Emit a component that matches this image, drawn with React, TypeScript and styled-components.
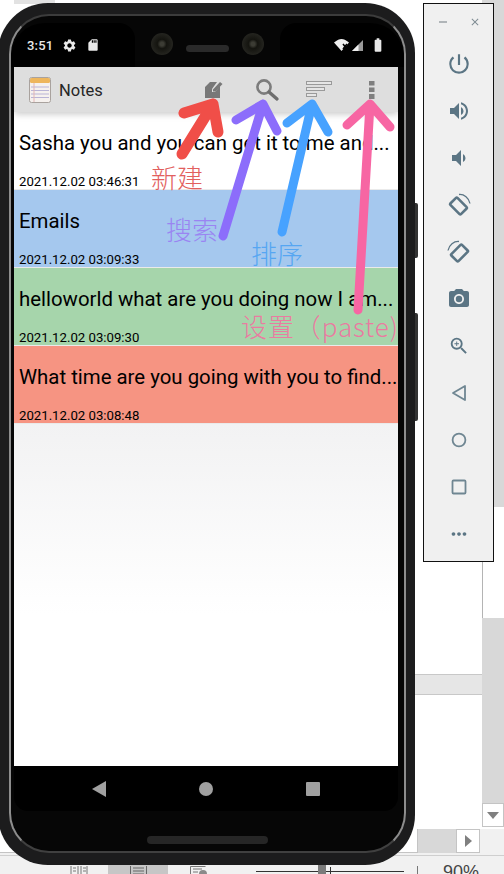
import { createGlobalStyle, styled } from "styled-components";
import {
  MdBatteryFull,
  MdCameraAlt,
  MdClose,
  MdMoreHoriz,
  MdPowerSettingsNew,
  MdSdCard,
  MdSettings,
  MdVolumeDown,
  MdVolumeUp,
  MdZoomIn,
} from "react-icons/md";

const GlobalStyle = createGlobalStyle`
  html, body {
    margin: 0;
    padding: 0;
    background: #fff;
    overflow: hidden;
  }
  * {
    box-sizing: border-box;
  }
`;

const Desktop = styled.div`
  position: relative;
  width: 504px;
  height: 874px;
  overflow: hidden;
  background: #fff;
  display: flex;
  flex-direction: column;
  font-family: Roboto, "Noto Sans", sans-serif;
`;

/* word document behind the emulator */
const DocArea = styled.div`
  display: flex;
  height: 829px;
`;

const DocPage = styled.div`
  flex: 1;
  display: flex;
  flex-direction: column;
  background: #fff;
`;

const TopTab = styled.div`
  width: 41px;
  height: 4px;
  margin-left: 14px;
  background: #e2e2e2;
`;

const PageWhite = styled.div<{ $h: number }>`
  height: ${(p) => p.$h}px;
`;

const PageGap = styled.div`
  height: 21px;
  background: #e6e6e6;
  border-top: 1px solid #c8c8c8;
  border-bottom: 1px solid #c8c8c8;
`;

const VScroll = styled.div`
  width: 22px;
  display: flex;
  flex-direction: column;
`;

const Track = styled.div<{ $h: number }>`
  height: ${(p) => p.$h}px;
  background: #d8d8d8;
`;

const Thumb = styled.div`
  height: 111px;
  background: #fff;
  border-left: 1px solid #b4b4b4;
`;

const ScrollButton = styled.div`
  height: 24px;
  background: #fff;
  border: 1px solid #c4c4c4;
  display: flex;
  align-items: center;
  justify-content: center;
`;

const HScroll = styled.div`
  display: flex;
  height: 26px;
  background: #f1f1f1;
  padding-bottom: 2px;
`;

const HThumb = styled.div`
  width: 418px;
  background: #fff;
  border-right: 1px solid #c4c4c4;
  border-bottom: 1px solid #c4c4c4;
`;

const HTrack = styled.div`
  width: 38px;
  background: #d8d8d8;
`;

const HButton = styled.div`
  width: 24px;
  background: #fff;
  border: 1px solid #c4c4c4;
  display: flex;
  align-items: center;
  justify-content: center;
`;

const StatusStrip = styled.div`
  flex: 1;
  display: flex;
  background: #f1f1f1;
  border-top: 1px solid #cfcfcf;
  padding-left: 70px;
  overflow: hidden;
`;

const StripIcon = styled.svg<{ $left: number }>`
  flex: none;
  margin-left: ${(p) => p.$left}px;
  margin-top: 10px;
`;

const ActiveView = styled.div`
  width: 60px;
  margin-left: 20px;
  background: #c6c6c6;
  display: flex;
  justify-content: center;
  padding-top: 10px;
`;

const ZoomSlider = styled.div`
  position: relative;
  width: 148px;
  height: 1px;
  margin: 15px 0 0 48px;
  background: #333;
`;

const SliderThumb = styled.div`
  position: absolute;
  left: 62px;
  top: -6px;
  width: 8px;
  height: 10px;
  background: #7b7b7b;
`;

const SliderTick = styled.div`
  position: absolute;
  left: 74px;
  top: -4px;
  width: 1px;
  height: 8px;
  background: #333;
`;

const StripDivider = styled.div`
  width: 1px;
  height: 8px;
  margin: 10px 0 0 13px;
  background: #777;
`;

const ZoomLabel = styled.span`
  margin: 6px 0 0 25px;
  font-family: "Liberation Sans", Arial, sans-serif;
  font-size: 18px;
  line-height: 20px;
  color: #444;
`;

/* android emulator */
const PhoneShell = styled.div`
  position: absolute;
  left: -2px;
  top: 3px;
  width: 417px;
  height: 862px;
  padding: 11px 9px 12px 11px;
  border-radius: 50px;
  background: #1c1c1d;
`;

const SideKey = styled.div<{ $top: number; $h: number }>`
  position: absolute;
  right: -3px;
  top: ${(p) => p.$top}px;
  width: 3px;
  height: ${(p) => p.$h}px;
  background: #333;
  border-radius: 0 2px 2px 0;
`;

const Bezel = styled.div`
  height: 100%;
  display: flex;
  flex-direction: column;
  border: 2px solid #8d8d8d;
  border-top-color: #3c3c3c;
  border-bottom-color: #404040;
  border-radius: 40px;
  background: #060606;
  overflow: hidden;
`;

const StatusBar = styled.div`
  height: 51px;
  flex: none;
  display: flex;
  padding-top: 7px;
  color: #e8e8e8;
`;

const StatusSide = styled.div<{ $right?: boolean }>`
  width: 124px;
  display: flex;
  align-items: center;
  background: #000;
  padding: ${(p) => (p.$right ? "0 18px 0 0" : "0 0 0 16px")};
  justify-content: ${(p) => (p.$right ? "flex-end" : "flex-start")};
  gap: ${(p) => (p.$right ? "3px" : "9px")};
  border-radius: ${(p) => (p.$right ? "16px 34px 0 0" : "34px 16px 0 0")};
`;

const Clock = styled.span`
  font-size: 13px;
  font-weight: 500;
  letter-spacing: 0.2px;
`;

const Notch = styled.div`
  width: 145px;
  display: flex;
  align-items: center;
  justify-content: space-between;
  padding: 0 16px;
  margin-bottom: 2px;
`;

const Camera = styled.div`
  width: 22px;
  height: 22px;
  border-radius: 50%;
  background: radial-gradient(circle, #3c3c34 0 12%, #14140f 30%, #24241f 70%, #161614 100%);
`;

const Speaker = styled.div`
  width: 43px;
  height: 7px;
  margin-top: 8px;
  border-radius: 4px;
  background: #2a2a2a;
`;

const Screen = styled.div`
  flex: 1;
  margin: 0 6px 0 3px;
  display: flex;
  flex-direction: column;
  background: #fff;
`;

const Toolbar = styled.div`
  position: relative;
  z-index: 1;
  height: 45px;
  flex: none;
  display: flex;
  align-items: center;
  padding-left: 15px;
  background: #dedede;
  box-shadow: 0 2px 7px rgba(0, 0, 0, 0.22);
`;

const AppTitle = styled.span`
  margin: 2px 0 0 8px;
  font-size: 16.5px;
  color: #262626;
`;

const Actions = styled.div`
  margin-left: auto;
  display: flex;
`;

const ActionSlot = styled.div`
  width: 52.5px;
  display: flex;
  justify-content: center;
  align-items: center;
`;

const NoteRow = styled.div<{ $bg: string }>`
  height: 78px;
  flex: none;
  display: flex;
  flex-direction: column;
  justify-content: space-between;
  padding: 19px 0 0 5px;
  background: ${(p) => p.$bg};
  border-bottom: 1px solid #eaeaea;
  color: #000;
`;

const NoteTitle = styled.div`
  font-size: 20.4px;
  line-height: 24px;
  white-space: nowrap;
`;

const NoteDate = styled.div`
  font-size: 13.2px;
  line-height: 15px;
`;

const EmptyArea = styled.div`
  flex: 1;
  background: linear-gradient(#f2f2f3, #ffffff 190px);
`;

const NavBar = styled.div`
  height: 45px;
  flex: none;
  margin: 0 6px 0 3px;
  display: grid;
  grid-template-columns: repeat(3, 107px);
  justify-content: center;
  align-items: center;
  justify-items: center;
  background: #000;
  border-radius: 0 0 14px 14px;
`;

const Chin = styled.div`
  height: 40px;
  flex: none;
  display: flex;
  align-items: flex-end;
  justify-content: center;
  padding-bottom: 7px;
`;

const ChinSpeaker = styled.div`
  width: 121px;
  height: 8px;
  border-radius: 4px;
  background: #262626;
`;

/* floating emulator toolbar */
const ControlPanel = styled.div`
  position: absolute;
  left: 423px;
  top: 3px;
  width: 71px;
  height: 559px;
  display: flex;
  flex-direction: column;
  align-items: center;
  background: #f0f0f0;
  border: 1px solid #111;
  color: #5b7584;
`;

const WindowButtons = styled.div`
  width: 100%;
  height: 36px;
  flex: none;
  display: flex;
  align-items: center;
  justify-content: space-between;
  padding: 0 12px 0 15px;
  color: #7f8c93;
`;

const MinimizeMark = styled.div`
  width: 8px;
  height: 2px;
  background: #b0b5b8;
`;

const ControlButton = styled.div`
  width: 100%;
  height: 47px;
  flex: none;
  display: flex;
  align-items: center;
  justify-content: center;
`;

/* hand drawn notes on top of the screenshot */
const Overlay = styled.svg`
  position: absolute;
  inset: 0;
  z-index: 2;
  pointer-events: none;
`;

const Scribble = styled.span<{ $x: number; $y: number; $color: string; $spacing?: number }>`
  position: absolute;
  z-index: 2;
  left: ${(p) => p.$x}px;
  top: ${(p) => p.$y}px;
  font-family: "Noto Sans CJK SC", "Noto Sans", sans-serif;
  font-size: 26px;
  line-height: 28px;
  font-weight: 300;
  letter-spacing: ${(p) => p.$spacing ?? 0}px;
  white-space: nowrap;
  color: ${(p) => p.$color};
`;

const notes = [
  { title: "Sasha you and you can get it to me and...", date: "2021.12.02 03:46:31", bg: "#ffffff" },
  { title: "Emails", date: "2021.12.02 03:09:33", bg: "#a5c8ee" },
  { title: "helloworld what are you doing now I am...", date: "2021.12.02 03:09:30", bg: "#a6d5ab" },
  { title: "What time are you going with you to find...", date: "2021.12.02 03:08:48", bg: "#f69482" },
];

const arrows = [
  { color: "#f04e48", width: 11, d: "M182 154L213 104M184 113L213 104L218 132" },
  { color: "#8c6dfb", width: 9, d: "M223 236L263 104M236 120L263 104L277 131" },
  { color: "#47a2ff", width: 9, d: "M282 232L312 104M287 123L312 104L328 132" },
  { color: "#f766a3", width: 9, d: "M358 310L370 104M347 125L370 104L390 127" },
];

function NotesIcon() {
  return (
    <svg width="22" height="26" viewBox="0 0 22 26">
      <rect x="0.5" y="0.5" width="21" height="25" rx="2" fill="#f6f1ee" stroke="#a9a29e" />
      <rect x="1" y="1" width="20" height="5" rx="1.5" fill="#eeb65c" />
      <path d="M2 10h18M2 13.5h18M2 17h18M2 20.5h18" stroke="#b9b4d6" strokeWidth="1" />
      <path d="M5 6v19" stroke="#e2b6b6" strokeWidth="1" />
    </svg>
  );
}

function EditIcon() {
  return (
    <svg width="18" height="18" viewBox="0 0 18 18">
      <path d="M5 1h7L7 8v3h3l5-6v12H0V6z" fill="#787878" />
      <path d="M8 8.5L15 1l2.5 2L10.5 10.5H8z" fill="#787878" />
    </svg>
  );
}

function SearchIcon() {
  return (
    <svg width="26" height="26" viewBox="0 0 26 26">
      <circle cx="10" cy="10" r="6.6" fill="none" stroke="#7c7c7c" strokeWidth="2.6" />
      <path d="M15 15l8 7" stroke="#6e6e6e" strokeWidth="3.4" strokeLinecap="round" />
    </svg>
  );
}

function SortIcon() {
  return (
    <svg width="26" height="17" viewBox="0 0 26 17">
      <rect x="0.5" y="0.5" width="25" height="3" fill="#e6e6e6" stroke="#9a9a9a" />
      <rect x="0.5" y="6.5" width="18" height="3" fill="#e6e6e6" stroke="#9a9a9a" />
      <rect x="0.5" y="12.5" width="10" height="3" fill="#e6e6e6" stroke="#9a9a9a" />
    </svg>
  );
}

function MoreIcon() {
  return (
    <svg width="6" height="18" viewBox="0 0 6 18">
      <rect width="5.5" height="4.5" fill="#7f7f7f" />
      <rect y="6.5" width="5.5" height="4.5" fill="#7f7f7f" />
      <rect y="13" width="5.5" height="5" fill="#7f7f7f" />
    </svg>
  );
}

function WifiIcon() {
  return (
    <svg width="15" height="12" viewBox="0 0 15 12">
      <path d="M0 3.5C3 1 5.5 0 7.5 0C9.5 0 12 1 15 3.5L7.5 12z" fill="#eee" />
      <path d="M9 5l4 5M13 5l-4 5" stroke="#000" strokeWidth="1.6" />
    </svg>
  );
}

function SignalIcon() {
  return (
    <svg width="11" height="11" viewBox="0 0 11 11" style={{ marginRight: 4 }}>
      <path d="M11 0v11H0z" fill="#9a9a9a" />
      <path d="M6.5 4.5V11H0z" fill="#eee" />
    </svg>
  );
}

function RotateIcon({ mirrored }: { mirrored?: boolean }) {
  return (
    <svg width="26" height="26" viewBox="0 0 26 26">
      <g transform={mirrored ? "translate(26 0) scale(-1 1)" : undefined}>
        <rect x="5" y="9" width="15" height="10" rx="1" transform="rotate(45 12.5 14)" fill="none" stroke="currentColor" strokeWidth="2.6" />
        <path d="M13 2.5C18 2 23 6 24 11.5" fill="none" stroke="currentColor" strokeWidth="1.3" />
      </g>
    </svg>
  );
}

function BackOutline() {
  return (
    <svg width="16" height="18" viewBox="0 0 16 18">
      <path d="M14 2v14L2 9z" fill="none" stroke="#6f8692" strokeWidth="1.8" strokeLinejoin="round" />
    </svg>
  );
}

function HomeOutline() {
  return (
    <svg width="16" height="16" viewBox="0 0 16 16">
      <circle cx="8" cy="8" r="6.4" fill="none" stroke="#6f8692" strokeWidth="1.8" />
    </svg>
  );
}

function SquareOutline() {
  return (
    <svg width="16" height="16" viewBox="0 0 16 16">
      <rect x="1.5" y="1.5" width="13" height="13" rx="1" fill="none" stroke="#6f8692" strokeWidth="1.8" />
    </svg>
  );
}

function App() {
  return (
    <>
      <GlobalStyle />
      <Desktop>
        <DocArea>
          <DocPage>
            <TopTab />
            <PageWhite $h={670} />
            <PageGap />
          </DocPage>
          <VScroll>
            <Track $h={507} />
            <Thumb />
            <Track $h={185} />
            <ScrollButton>
              <svg width="12" height="7" viewBox="0 0 12 7">
                <path d="M0 0h12L6 7z" fill="#808080" />
              </svg>
            </ScrollButton>
          </VScroll>
        </DocArea>
        <HScroll>
          <HThumb />
          <HTrack />
          <HButton>
            <svg width="7" height="12" viewBox="0 0 7 12">
              <path d="M0 0v12l7-6z" fill="#808080" />
            </svg>
          </HButton>
        </HScroll>
        <StatusStrip>
          <StripIcon $left={0} width="18" height="9" viewBox="0 0 18 9">
            <path d="M1 0v9M8 0v9M11 0v9M17 0v9M3 2h3M3 5h3M13 2h3M13 5h3" stroke="#777" fill="none" />
          </StripIcon>
          <ActiveView>
            <svg width="17" height="9" viewBox="0 0 17 9">
              <path d="M.5 0v9M16.5 0v9M3 2h11M3 5h11M3 8h11" stroke="#666" fill="none" />
            </svg>
          </ActiveView>
          <StripIcon $left={22} width="18" height="9" viewBox="0 0 18 9">
            <path d="M.5 9V.5h15M3 3h9M3 6h5" stroke="#777" fill="none" />
            <circle cx="13" cy="8" r="4" fill="#8a8a8a" />
          </StripIcon>
          <ZoomSlider>
            <SliderThumb />
            <SliderTick />
          </ZoomSlider>
          <StripDivider />
          <ZoomLabel>90%</ZoomLabel>
        </StatusStrip>

        <PhoneShell>
          <SideKey $top={200} $h={55} />
          <SideKey $top={310} $h={108} />
          <Bezel>
            <StatusBar>
              <StatusSide>
                <Clock>3:51</Clock>
                <MdSettings size={15} />
                <MdSdCard size={14} />
              </StatusSide>
              <Notch>
                <Camera />
                <Speaker />
                <Camera />
              </Notch>
              <StatusSide $right>
                <WifiIcon />
                <SignalIcon />
                <MdBatteryFull size={16} />
              </StatusSide>
            </StatusBar>
            <Screen>
              <Toolbar>
                <NotesIcon />
                <AppTitle>Notes</AppTitle>
                <Actions>
                  <ActionSlot>
                    <EditIcon />
                  </ActionSlot>
                  <ActionSlot>
                    <SearchIcon />
                  </ActionSlot>
                  <ActionSlot>
                    <SortIcon />
                  </ActionSlot>
                  <ActionSlot>
                    <MoreIcon />
                  </ActionSlot>
                </Actions>
              </Toolbar>
              {notes.map((note) => (
                <NoteRow key={note.date} $bg={note.bg}>
                  <NoteTitle>{note.title}</NoteTitle>
                  <NoteDate>{note.date}</NoteDate>
                </NoteRow>
              ))}
              <EmptyArea />
            </Screen>
            <NavBar>
              <svg width="14" height="16" viewBox="0 0 14 16">
                <path d="M14 0v16L0 8z" fill="#a0a0a0" />
              </svg>
              <svg width="14" height="14" viewBox="0 0 14 14">
                <circle cx="7" cy="7" r="7" fill="#a0a0a0" />
              </svg>
              <svg width="14" height="14" viewBox="0 0 14 14">
                <rect width="14" height="14" rx="1" fill="#a0a0a0" />
              </svg>
            </NavBar>
            <Chin>
              <ChinSpeaker />
            </Chin>
          </Bezel>
        </PhoneShell>

        <ControlPanel>
          <WindowButtons>
            <MinimizeMark />
            <MdClose size={12} />
          </WindowButtons>
          <ControlButton>
            <MdPowerSettingsNew size={26} />
          </ControlButton>
          <ControlButton>
            <MdVolumeUp size={24} />
          </ControlButton>
          <ControlButton>
            <MdVolumeDown size={24} />
          </ControlButton>
          <ControlButton>
            <RotateIcon />
          </ControlButton>
          <ControlButton>
            <RotateIcon mirrored />
          </ControlButton>
          <ControlButton>
            <MdCameraAlt size={24} />
          </ControlButton>
          <ControlButton>
            <MdZoomIn size={22} />
          </ControlButton>
          <ControlButton>
            <BackOutline />
          </ControlButton>
          <ControlButton>
            <HomeOutline />
          </ControlButton>
          <ControlButton>
            <SquareOutline />
          </ControlButton>
          <ControlButton>
            <MdMoreHoriz size={22} />
          </ControlButton>
        </ControlPanel>

        <Scribble $x={151} $y={163} $color="#e2605e">新建</Scribble>
        <Scribble $x={166} $y={215} $color="#9a84f2">搜索</Scribble>
        <Scribble $x={251} $y={239} $color="#56a6f2">排序</Scribble>
        <Scribble $x={241} $y={312} $color="#ea7ba1" $spacing={0.9}>设置（paste)</Scribble>
        <Overlay width="504" height="874" viewBox="0 0 504 874">
          {arrows.map((arrow) => (
            <path
              key={arrow.color}
              d={arrow.d}
              fill="none"
              stroke={arrow.color}
              strokeWidth={arrow.width}
              strokeLinecap="round"
              strokeLinejoin="round"
            />
          ))}
        </Overlay>
      </Desktop>
    </>
  );
}

export default App;
